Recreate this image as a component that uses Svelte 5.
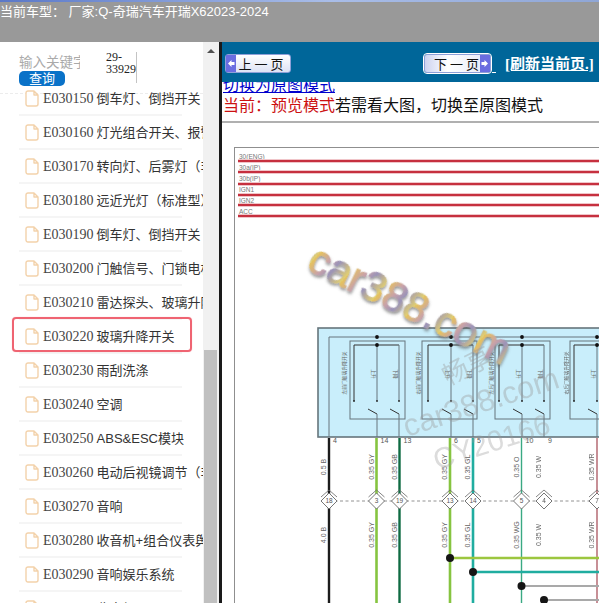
<script>
  const rows = [
    ['E030150', '倒车灯、倒挡开关'],
    ['E030160', '灯光组合开关、报警灯'],
    ['E030170', '转向灯、后雾灯（非'],
    ['E030180', '远近光灯（标准型）'],
    ['E030190', '倒车灯、倒挡开关'],
    ['E030200', '门触信号、门锁电机'],
    ['E030210', '雷达探头、玻璃升降'],
    ['E030220', '玻璃升降开关'],
    ['E030230', '雨刮洗涤'],
    ['E030240', '空调'],
    ['E030250', 'ABS&ESC模块'],
    ['E030260', '电动后视镜调节（非'],
    ['E030270', '音响'],
    ['E030280', '收音机+组合仪表舆'],
    ['E030290', '音响娱乐系统'],
    ['E030300', '收音机']
  ];

  const rails = [
    ['30(ENG)', 159, 161],
    ['30a(IP)', 169.5, 172],
    ['30b(IP)', 180.5, 184],
    ['IGN1', 191.5, 195],
    ['IGN2', 202.5, 205],
    ['ACC', 213.5, 216]
  ];

  // each switch module: frame x, width, then the three drops
  const modules = [
    { x: 350, w: 55, drops: [354, 377, 399], label: '左前门玻璃升降开关', lx: 344 },
    { x: 422, w: 55, drops: [428, 451, 473], label: '右前门玻璃升降开关', lx: 418 },
    { x: 495, w: 55, drops: [499, 522, 544], label: '左后门玻璃升降开关', lx: 491 },
    { x: 570, w: 55, drops: [574, 597, 620], label: '右后门玻璃升降开关', lx: 566 }
  ];

  const wires = [
    { x: 329, color: '#1c1c1c', w: 2.4, pin: '4', top: '0.5 B', bottom: '4.0 B', n: '18' },
    { x: 376.5, color: '#86c440', w: 2.6, pin: '14', top: '0.35 GY', bottom: '0.35 GY', n: '3' },
    { x: 399.5, color: '#0f6b42', w: 2.4, pin: '13', top: '0.35 GB', bottom: '0.35 GB', n: '19' },
    { x: 450, color: '#86c440', w: 2.6, pin: '6', top: '0.35 GY', bottom: '0.35 GY', n: '13' },
    { x: 473, color: '#20ada0', w: 2.6, pin: '5', top: '0.35 GL', bottom: '0.35 GL', n: '14' },
    { x: 521.5, color: '#3aa983', w: 1.4, pin: '10', top: '0.35 O', bottom: '0.35 WG', n: '5' },
    { x: 544, color: 'none', w: 1, pin: '9', top: '0.35 W', bottom: '0.35 W', n: '4' },
    { x: 597, color: '#b0606a', w: 1.4, pin: '', top: '0.35 WR', bottom: '0.35 WR', n: '7' }
  ];

  const taps = [
    { x: 450, y: 558, color: '#9cc63f', w: 2.6 },
    { x: 473, y: 572, color: '#20ada0', w: 2.6 },
    { x: 521.5, y: 586, color: '#a9a9a9', w: 2 },
    { x: 544, y: 600, color: '#a9a9a9', w: 2 }
  ];
</script>

<div class="page">
  <header class="topbar">
    <div class="strip"></div>
    <div class="car">当前车型： 厂家:Q-奇瑞汽车开瑞X62023-2024</div>
  </header>

  <div class="body">
    <aside class="side">
      <div class="side-main">
        <div class="search">
          <div class="query">
            <div class="keyword">输入关键字</div>
            <button class="go" type="button">查询</button>
          </div>
          <div class="code-no">29-<br />33929</div>
        </div>
        <ul class="tree">
          {#each rows as row}
            <li class:picked={row[0] === 'E030220'}>
              <svg class="doc" viewBox="0 0 14 17" width="14" height="17" aria-hidden="true">
                <path d="M1 3 a2 2 0 0 1 2-2 h6 l4 4 v9 a2 2 0 0 1-2 2 H3 a2 2 0 0 1-2-2 Z M9 1 v4 h4" fill="#fff" stroke="#f3d2ab" stroke-width="1.4" stroke-linejoin="round" />
              </svg>
              <span class="code">{row[0]}</span>
              <span class="name">{row[1]}</span>
            </li>
          {/each}
        </ul>
      </div>
      <div class="scroll">
        <div class="up"></div>
        <div class="thumb"></div>
      </div>
    </aside>

    <main class="main">
      <nav class="nav">
        <button class="pager" type="button">
          <svg class="arrow" viewBox="0 0 10 17" width="10" height="17" aria-hidden="true">
            <rect width="10" height="17" fill="#6a6de0" />
            <path d="M2 8.5 L5.5 5 V7 H8.5 V10 H5.5 V12 Z" fill="#fff" />
          </svg>
          <span>上 一 页</span>
        </button>
        <button class="pager next" type="button">
          <span>下 一 页</span>
          <svg class="arrow" viewBox="0 0 10 17" width="10" height="17" aria-hidden="true">
            <rect width="10" height="17" fill="#6a6de0" />
            <path d="M8 8.5 L4.5 5 V7 H1.5 V10 H4.5 V12 Z" fill="#fff" />
          </svg>
        </button>
        <span class="under">&nbsp;</span>
        <a class="refresh" href="#refresh">[刷新当前页.]</a>
      </nav>

      <div class="mode">
        <a class="switch" href="#origin">切换为原图模式</a>
        <div class="status"><span class="red">当前：预览模式</span>若需看大图，切换至原图模式</div>
      </div>
      <div class="rule"></div>

      <svg class="sheet" viewBox="222 123 377 480" width="377" height="480">
        <defs>
          <linearGradient id="shine" gradientUnits="userSpaceOnUse" x1="0" y1="0" x2="34" y2="10" spreadMethod="repeat">
            <stop offset="0" stop-color="#e6c35c" />
            <stop offset="0.35" stop-color="#c9a2a8" />
            <stop offset="0.6" stop-color="#9a93b8" />
            <stop offset="1" stop-color="#e2cf70" />
          </linearGradient>
          <filter id="soft" x="-10%" y="-10%" width="120%" height="130%">
            <feDropShadow dx="1" dy="2" stdDeviation="1.4" flood-color="#555" flood-opacity="0.65" />
          </filter>
        </defs>

        <rect x="234.5" y="147.5" width="400" height="500" fill="#fff" stroke="#8f8f8f" stroke-width="1" />

        {#each rails as rail}
          <text class="rail-label" x="239" y={rail[1]}>{rail[0]}</text>
          <line x1="238" x2="599" y1={rail[2]} y2={rail[2]} stroke="#f0c5c9" stroke-width="4" />
          <line x1="238" x2="599" y1={rail[2]} y2={rail[2]} stroke="#c6303f" stroke-width="2" />
        {/each}

        <rect x="318" y="328" width="300" height="109" fill="#c9eefb" stroke="#66757c" stroke-width="1.6" />
        <line x1="329" x2="599" y1="337" y2="337" stroke="#66757c" />
        <line x1="329" x2="329" y1="337" y2="437" stroke="#66757c" />

        {#each modules as m}
          <rect x={m.x} y="341" width={m.w} height="78" fill="none" stroke="#66757c" />
          <line x1={m.drops[0]} x2={m.drops[2]} y1="345" y2="345" stroke="#333" />
          {#each m.drops as d, i}
            <line x1={d} x2={d} y1="345" y2="401" stroke={i === 0 ? '#333' : '#66757c'} />
            <circle cx={d} cy="401" r="0.9" fill="#222" />
            {#if i > 0}
              <line x1={d - 9} x2={d} y1="409" y2="414" stroke="#333" />
              <line x1={d} x2={d} y1="414" y2="437" stroke="#66757c" />
              <text class="tiny" transform="translate({d - 5} 374) rotate(90)" text-anchor="middle">{i === 1 ? '上升' : '下降'}</text>
            {/if}
          {/each}
          <circle cx={m.drops[1]} cy="337" r="1.9" fill="#111" />
          <circle cx={m.drops[1]} cy="345" r="1.9" fill="#111" />
          <text class="tiny" transform="translate({m.lx + 2} 373) rotate(-90)" text-anchor="middle">{m.label}</text>
        {/each}

        <line x1="329" x2="599" y1="501" y2="501" stroke="#777" stroke-width="0.8" stroke-dasharray="3 2.5" />

        {#each wires as w}
          {#if w.color !== 'none'}
            <line x1={w.x} x2={w.x} y1="438" y2="603" stroke={w.color} stroke-width={w.w} />
          {/if}
          {#if w.pin}
            <text class="pin" x={w.x + 4} y="443">{w.pin}</text>
          {/if}
          <text class="gauge" transform="translate({w.x - 3} 467) rotate(-90)" text-anchor="middle">{w.top}</text>
          <text class="gauge" transform="translate({w.x - 3} 535) rotate(-90)" text-anchor="middle">{w.bottom}</text>
          <path d="M{w.x - 8} 497 l8 -7 l8 7" fill="none" stroke="#666" stroke-width="0.8" />
          <path d="M{w.x} 493 l8 8 l-8 8 l-8 -8 Z" fill="#fff" stroke="#666" stroke-width="0.9" />
          <text class="node" x={w.x} y="503.3" text-anchor="middle">{w.n}</text>
        {/each}

        {#each taps as t}
          <line x1={t.x} x2="599" y1={t.y} y2={t.y} stroke={t.color} stroke-width={t.w} />
          <circle cx={t.x} cy={t.y} r="4" fill="#151515" />
        {/each}

        <text class="mark-big" transform="translate(305 269) rotate(26)" fill="url(#shine)" stroke="url(#shine)" stroke-width="0.9" filter="url(#soft)">car388.com</text>
        <text class="mark-grey" transform="translate(407 437) rotate(-18)">car388.com</text>
        <text class="mark-han" transform="translate(448 386) rotate(-27)">畅享</text>
        <text class="mark-cy" transform="translate(437 470) rotate(-18)">CY20166</text>
      </svg>
    </main>
  </div>
</div>

<style>
  :global(body) {
    margin: 0;
    overflow: hidden;
    background: #fff;
  }

  .page {
    display: flex;
    flex-direction: column;
    width: 599px;
    height: 603px;
    overflow: hidden;
    font-family: "Liberation Sans", "Noto Sans CJK SC", sans-serif;
  }

  .topbar {
    flex: none;
    height: 42px;
    background: #999999;
    color: #fff;
  }

  .strip {
    height: 2px;
    background: linear-gradient(90deg, #5a78c8, #a9bde8 55%, #8fa6d6);
  }

  .car {
    font-size: 13px;
    line-height: 20px;
  }

  .body {
    flex: 1;
    display: flex;
    min-height: 0;
  }

  .side {
    flex: none;
    display: flex;
    width: 219px;
    background: #fff;
  }

  .side-main {
    width: 203px;
    min-width: 0;
    overflow: hidden;
  }

  .search {
    display: flex;
    height: 52px;
    box-sizing: border-box;
    padding: 10px 0 0 19px;
    border-bottom: 1px dashed #ececec;
  }

  .query {
    width: 61px;
    overflow: hidden;
    flex: none;
    margin-top: 3px;
  }

  .keyword {
    height: 16px;
    line-height: 16px;
    font-size: 13.5px;
    color: #aaaaaa;
    white-space: nowrap;
  }

  .go {
    display: block;
    width: 46px;
    height: 15px;
    margin: 0;
    padding: 0;
    border: 0;
    border-radius: 5px;
    background: #0a72c8;
    color: #fff;
    font: 13px/15px "Liberation Sans", "Noto Sans CJK SC", sans-serif;
  }

  .code-no {
    width: 30px;
    height: 31px;
    margin-left: 26px;
    border-right: 1px solid #c4c4c4;
    font-family: "Liberation Serif", "Noto Sans CJK SC", serif;
    font-size: 12px;
    line-height: 11.5px;
    color: #222;
  }

  .tree {
    list-style: none;
    margin: -12px 0 0;
    padding: 0;
  }

  .tree li {
    position: relative;
    display: flex;
    align-items: baseline;
    height: 32px;
    line-height: 33px;
    margin-left: 19px;
    width: 163px;
    border-bottom: 2px solid #f5f5f5;
    white-space: nowrap;
    color: #333;
    font-size: 13px;
  }

  .tree li.picked::after {
    content: "";
    position: absolute;
    left: -7px;
    top: -3px;
    width: 176px;
    height: 31px;
    border: 2px solid #ef6472;
    border-radius: 4px;
    box-shadow: 0 0 1px #f7a9b1;
  }

  .doc {
    flex: none;
    align-self: center;
    margin-left: 6px;
    margin-right: 4px;
  }

  .code {
    font-family: "Liberation Serif", serif;
    font-size: 14px;
    color: #444;
    margin-right: 3px;
  }

  .name {
    color: #333;
  }

  .scroll {
    flex: none;
    position: relative;
    width: 16px;
    background: #f1f1f1;
  }

  .up {
    width: 0;
    height: 0;
    margin: 7px auto 0;
    border-left: 4px solid transparent;
    border-right: 4px solid transparent;
    border-bottom: 4px solid #505050;
  }

  .thumb {
    position: absolute;
    left: 1px;
    right: 2px;
    top: 308px;
    bottom: 0;
    background: #c0c0c0;
  }

  .main {
    flex: 1;
    min-width: 0;
    border-left: 3px solid #1a1a1a;
    overflow: hidden;
    background: #fff;
  }

  .nav {
    display: flex;
    align-items: center;
    height: 40px;
    padding-left: 3px;
    background: #006699;
  }

  .pager {
    display: flex;
    align-items: center;
    justify-content: space-between;
    box-sizing: border-box;
    width: 66px;
    height: 19px;
    margin: 2px 0 0;
    padding: 0 4px 0 0;
    border: 1px solid #8ea0d8;
    border-radius: 3px;
    background: linear-gradient(180deg, #ffffff, #dde2f4);
    font: 13px/17px "Noto Sans CJK SC", sans-serif;
    color: #111;
  }

  .pager.next {
    margin-left: 133px;
    width: 67px;
    padding: 0 0 0 8px;
    background: linear-gradient(90deg, #cdd3f0, #ffffff 35%, #e4e7f6);
    outline: 1px solid #fff;
  }

  .pager span {
    flex: 1;
    text-align: center;
    white-space: nowrap;
  }

  .arrow {
    flex: none;
  }

  .under {
    width: 4px;
    height: 1px;
    margin-top: 20px;
    margin-left: 1px;
    background: #fff;
    overflow: hidden;
  }

  .refresh {
    margin-left: 9px;
    color: #fff;
    font-family: "Liberation Serif", "Noto Sans CJK SC", serif;
    font-size: 15px;
    font-weight: 700;
    white-space: nowrap;
    text-decoration: underline;
  }

  .mode {
    height: 39px;
    overflow: hidden;
    font-family: "Noto Sans CJK SC", sans-serif;
    font-size: 16px;
    line-height: 16px;
    color: #111;
    padding-left: 1px;
  }

  .switch {
    display: block;
    height: 14px;
    margin-top: -7px;
    color: #0000cc;
    text-decoration: underline;
    line-height: 18px;
    width: 112px;
  }

  .status {
    margin-top: 6px;
    line-height: 18px;
    white-space: nowrap;
  }

  .red {
    color: #cc1111;
  }

  .rule {
    height: 2px;
    background: #b0b0b0;
  }

  .sheet {
    display: block;
    filter: blur(0.25px);
  }

  .rail-label {
    font: 6.5px "Liberation Sans", sans-serif;
    fill: #777;
  }

  .tiny {
    font: 4.8px "Noto Sans CJK SC", sans-serif;
    fill: #666;
  }

  .pin {
    font: 7px "Liberation Sans", sans-serif;
    fill: #555;
  }

  .gauge {
    font: 7px "Liberation Sans", sans-serif;
    fill: #666;
  }

  .node {
    font: 6.5px "Liberation Sans", sans-serif;
    fill: #555;
  }

  .mark-big {
    font: 42px "Liberation Sans", sans-serif;
  }

  .mark-grey {
    font: 31px "Liberation Sans", sans-serif;
    fill: #9a9a9a;
    opacity: 0.38;
  }

  .mark-han {
    font: 26px "Noto Sans CJK SC", sans-serif;
    fill: #9a9a9a;
    opacity: 0.38;
  }

  .mark-cy {
    font: 29px "Liberation Sans", sans-serif;
    fill: #9a9a9a;
    opacity: 0.35;
  }
</style>
